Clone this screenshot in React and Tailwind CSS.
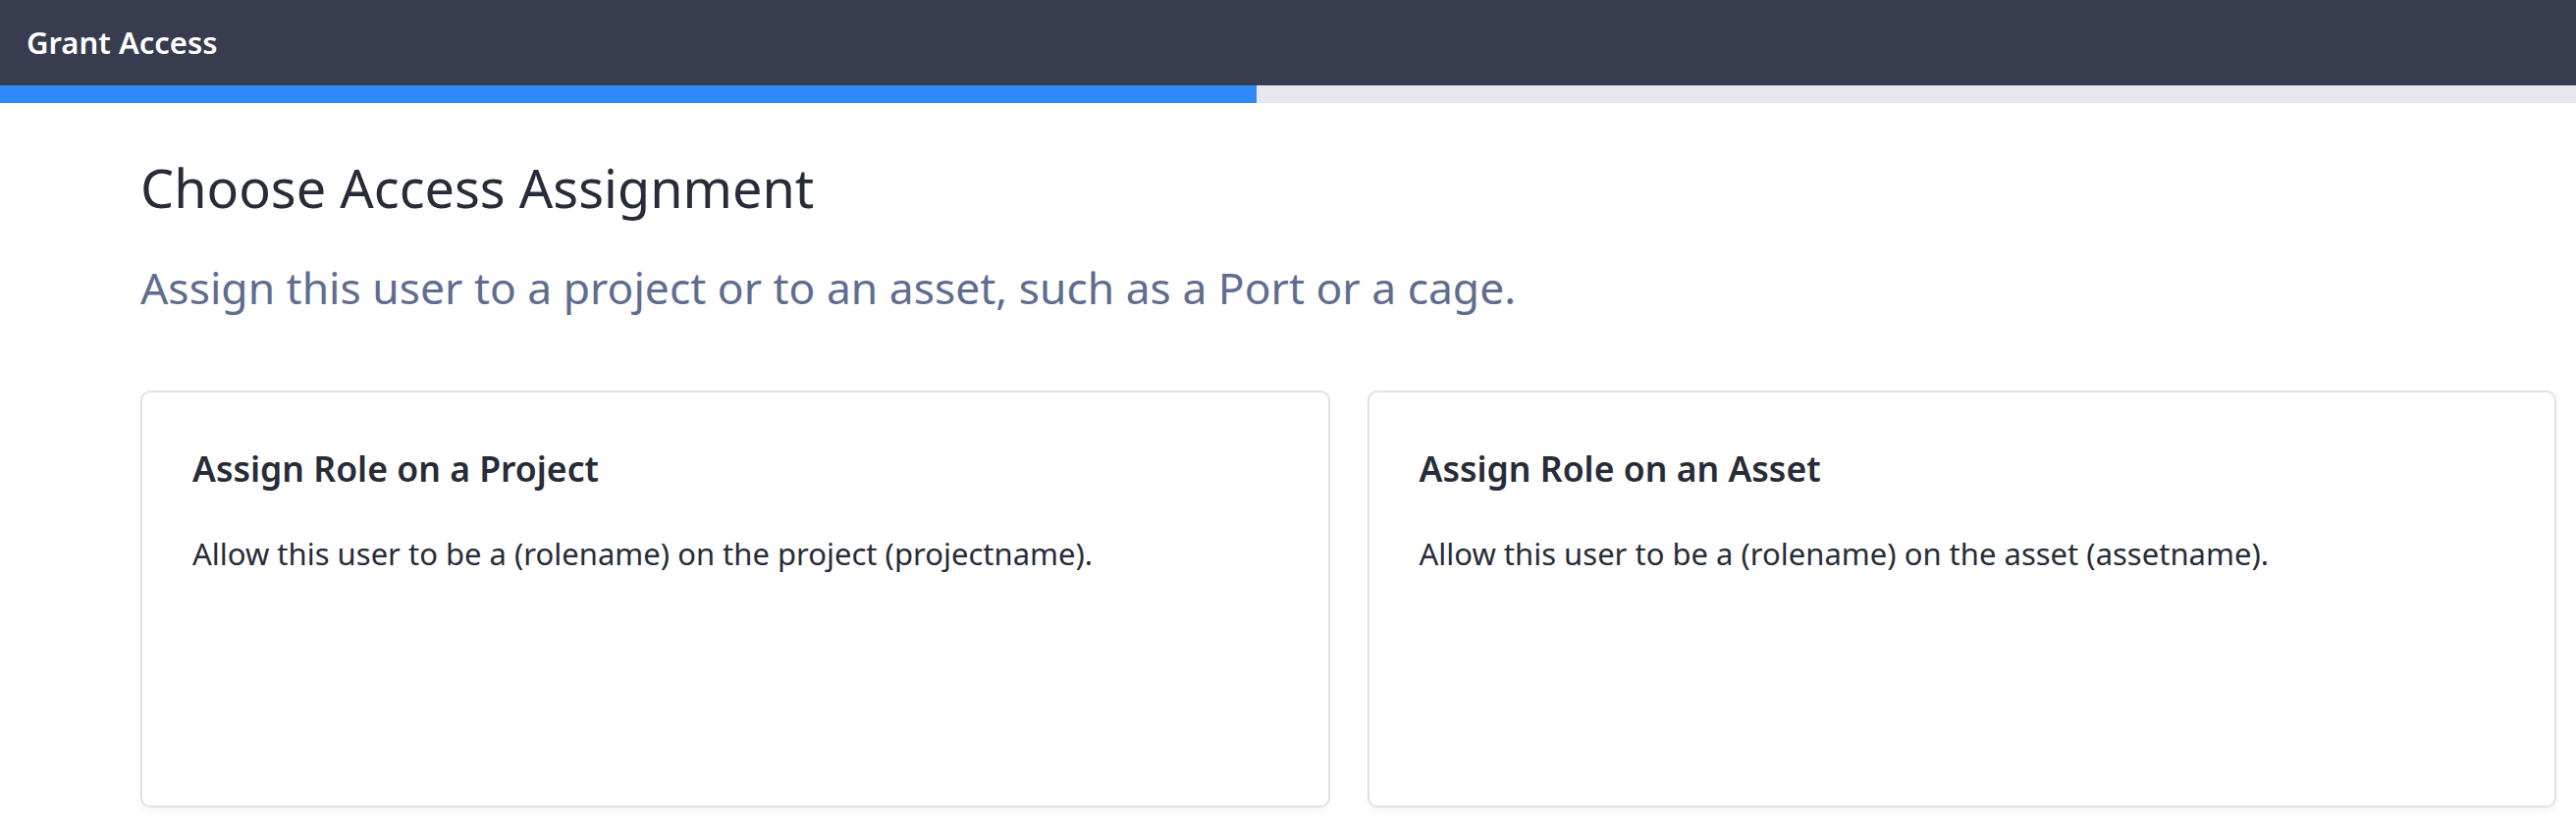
const cards = [
  {
    title: "Assign Role on a Project",
    text: "Allow this user to be a (rolename) on the project (projectname).",
  },
  {
    title: "Assign Role on an Asset",
    text: "Allow this user to be a (rolename) on the asset (assetname).",
  },
];

const App = () => {
  return (
    <div
      className="min-h-screen bg-white"
      style={{ fontFamily: '"Noto Sans", "Open Sans", sans-serif' }}
    >
      <header className="flex h-[87px] items-center bg-[#373d4e] px-[27px]">
        <h1 className="text-[31px] font-semibold text-white">Grant Access</h1>
      </header>

      <div className="h-[18px] w-full bg-[#e6e8ee]">
        <div className="h-full w-[1280px] bg-[#2d89f7]" />
      </div>

      <main className="pl-[143px] pr-[20px]">
        <h2 className="mt-[54px] text-[54px] leading-[64px] text-[#272c38]">
          Choose Access Assignment
        </h2>
        <p className="mt-[44px] text-[44.4px] leading-[52px] text-[#5f6d8f]">
          Assign this user to a project or to an asset, such as a Port or a cage.
        </p>

        <div className="mt-[79px] grid grid-cols-2 gap-[38px]">
          {cards.map((card) => (
            <div
              key={card.title}
              className="h-[425px] rounded-[10px] border-2 border-[#e1e1e8] bg-white px-[51px] pt-[56px] shadow-[0_4px_10px_rgba(0,0,0,0.04)]"
            >
              <h3 className="text-[35.6px] font-semibold leading-[42px] text-[#272c38]">
                {card.title}
              </h3>
              <p className="mt-[43px] text-[31px] leading-[46px] text-[#272c38]">
                {card.text}
              </p>
            </div>
          ))}
        </div>
      </main>
    </div>
  );
};

export default App;
